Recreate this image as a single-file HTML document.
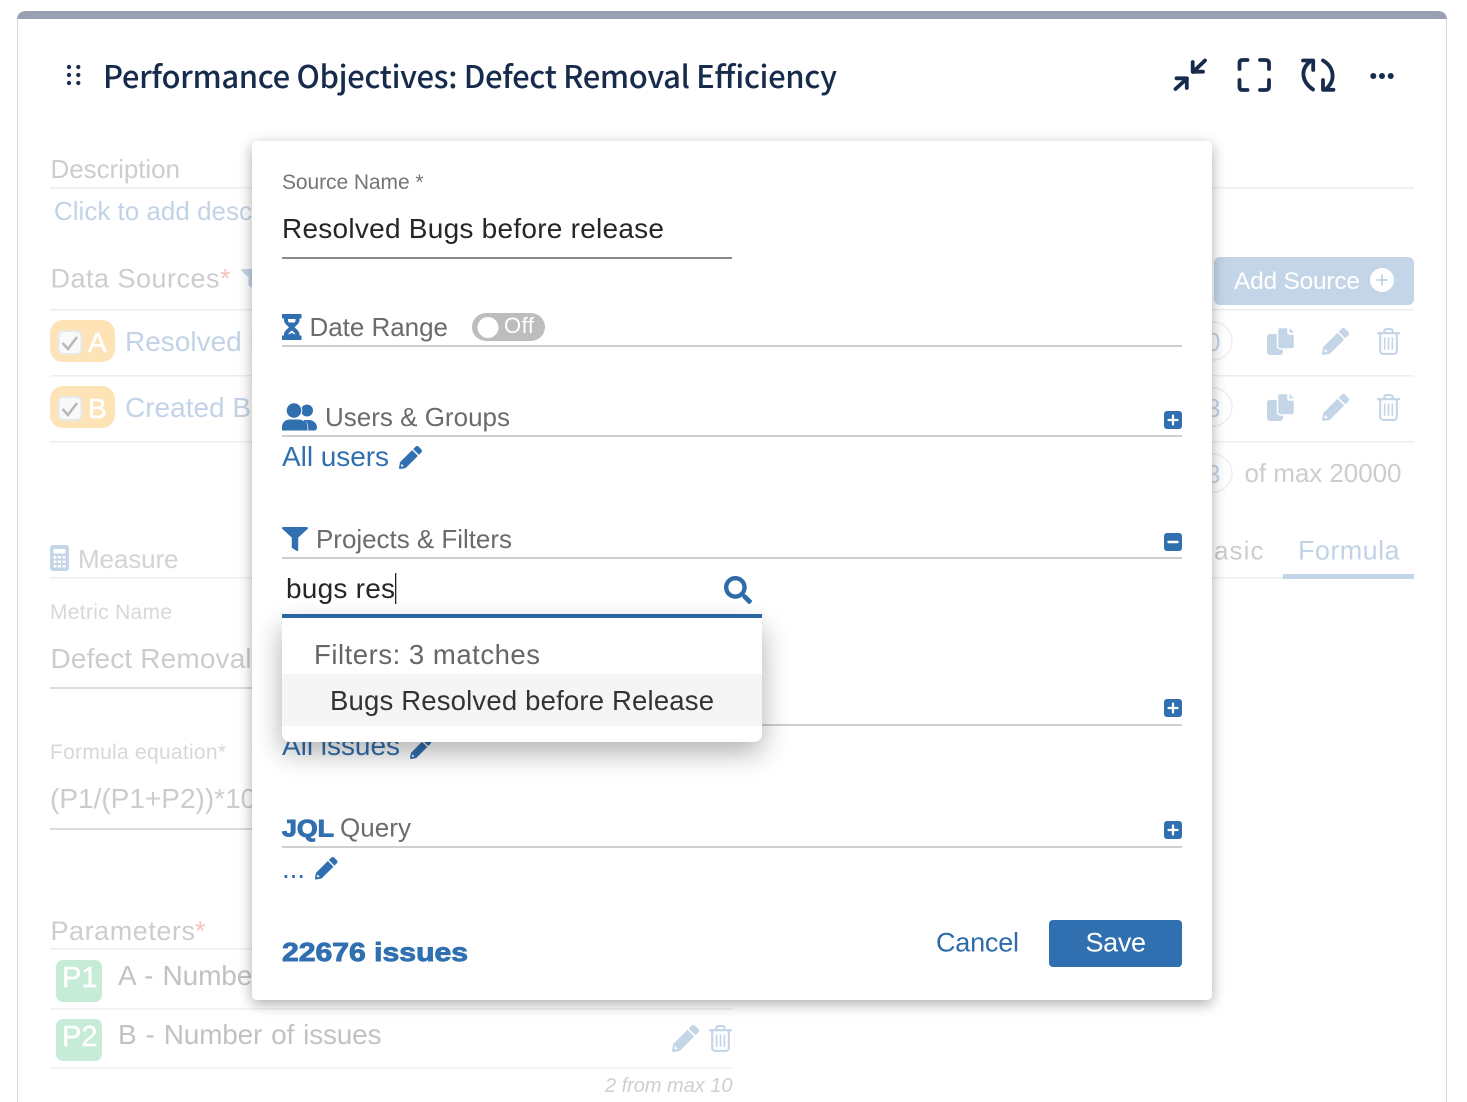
<!DOCTYPE html>
<html><head><meta charset="utf-8">
<style>
html,body{margin:0;padding:0;background:#fff;width:1467px;height:1102px;overflow:hidden}
svg.l{position:absolute;left:0;top:0}
text{font-family:"Liberation Sans",sans-serif;white-space:pre}
#modal{position:absolute;left:252px;top:141px;width:960px;height:859px;background:#fff;border-radius:5px;box-shadow:0 4px 14px rgba(0,0,0,.33)}
#drop{position:absolute;left:282px;top:618px;width:480px;height:124px;background:#fff;border-radius:0 0 8px 8px;box-shadow:0 10px 28px rgba(0,0,0,.32)}
#hl{position:absolute;left:0;top:56px;width:480px;height:52px;background:#f5f5f5}
</style></head><body>
<svg width="0" height="0" style="position:absolute">
<defs>
<symbol id="pencil" viewBox="0 0 512 512"><path fill="currentColor" fill-rule="evenodd" d="M497.9 142.1l-46.1 46.1c-4.7 4.7-12.3 4.7-17 0l-111-111c-4.7-4.7-4.7-12.3 0-17l46.1-46.1c18.7-18.7 49.1-18.7 67.9 0l60.1 60.100c18.800 18.700 18.800 49.100 0 67.900zM284.200 99.800L21.600 362.400.4 483.900c-2.900 16.400 11.400 30.600 27.800 27.800l121.500-21.300 262.600-262.600c4.700-4.700 4.700-12.300 0-17l-111-111c-4.800-4.700-12.400-4.700-17.100 0zM55 395L108 448 45 462Z"/></symbol>
<symbol id="funnel" viewBox="0 0 512 512" preserveAspectRatio="none"><path fill="currentColor" d="M487.976 0H24.028C2.71 0-8.047 25.866 7.058 40.971L192 225.941V432c0 7.831 3.821 15.17 10.237 19.662l80 55.98C298.02 518.69 320 507.493 320 487.98V225.941l184.947-184.97C520.021 25.896 509.338 0 487.976 0z"/></symbol>
<symbol id="search" viewBox="0 0 512 512"><path fill="currentColor" d="M505 442.7L405.3 343c-4.5-4.5-10.6-7-17-7H372c27.6-35.3 44-79.7 44-128C416 93.1 322.9 0 208 0S0 93.1 0 208s93.1 208 208 208c48.3 0 92.7-16.4 128-44v16.3c0 6.4 2.5 12.5 7 17l99.7 99.7c9.4 9.4 24.6 9.4 33.9 0l28.3-28.3c9.4-9.4 9.4-24.6.1-34zM208 336c-70.7 0-128-57.2-128-128 0-70.7 57.2-128 128-128 70.7 0 128 57.2 128 128 0 70.7-57.2 128-128 128z"/></symbol>
<symbol id="trash" viewBox="0 0 22 26"><g fill="none" stroke="currentColor"><path stroke-width="2" stroke-linecap="round" d="M0.5 5H21.5"/><path stroke-width="2" d="M7 5V3.2C7 2 7.8 1 9 1H13C14.2 1 15 2 15 3.2V5"/><path stroke-width="2" d="M3 5V22C3 23.7 4.2 25 6 25H16C17.8 25 19 23.7 19 22V5"/><path stroke-width="1.6" d="M7.3 9V21M11 9V21M14.7 9V21"/></g></symbol>
<symbol id="copy" viewBox="0 0 27 27"><path fill="currentColor" d="M2.5 6H12V12H16V23.500C16 25.400 14.800 27 13 27H3C1.200 27 0 25.400 0 23.500V8.500C0 7.200 1.200 6 2.500 6Z"/><path fill="currentColor" stroke="#fff" stroke-width="1.500" d="M12.500 -0.500H21V5C21 5.600 21.400 6 22 6H27.500V18C27.500 19.800 26.200 21 24.500 21H14C12 21 10.500 19.800 10.500 18V1.500C10.500 0.400 11.400 -0.500 12.500 -0.500Z"/><path fill="currentColor" d="M22.500 0L27 4.500H22.500Z"/></symbol>
<symbol id="plusb" viewBox="0 0 18 18"><rect width="18" height="18" rx="3" fill="#3170b0"/><path d="M9 4.500V13.500M4.500 9H13.500" stroke="#fff" stroke-width="2.200" stroke-linecap="round"/></symbol>
<symbol id="minusb" viewBox="0 0 18 18"><rect width="18" height="18" rx="3" fill="#3170b0"/><path d="M4.500 9H13.500" stroke="#fff" stroke-width="2.400" stroke-linecap="round"/></symbol>
</defs>
</svg>

<!-- Background layer -->
<svg class="l" width="1467" height="1102" viewBox="0 0 1467 1102">
<path d="M17.500 1102V22C17.500 15 21 11.500 27 11.500H1437C1443 11.500 1446.500 15 1446.500 22V1102" fill="#fff" stroke="#d7d9df" stroke-width="1"/>
<path d="M17 19V20C17 14 21 11 26 11H1438C1443 11 1447 14 1447 20V19Z" fill="#97a1b1"/>
<g fill="#172b4d"><circle cx="69" cy="67" r="2.100"/><circle cx="78.300" cy="67" r="2.100"/><circle cx="69" cy="75" r="2.100"/><circle cx="78.300" cy="75" r="2.100"/><circle cx="69" cy="83" r="2.100"/><circle cx="78.300" cy="83" r="2.100"/></g>
<text x="103" y="88" font-size="31" font-weight="500" fill="#172b4d" textLength="734" style="font-family:'Noto Sans CJK JP','Liberation Sans',sans-serif">Performance Objectives: Defect Removal Efficiency</text>
<g fill="none" stroke="#172b4d" stroke-width="3.800" stroke-linecap="round" stroke-linejoin="round">
<path d="M1205 60.500L1193 72M1192.700 62V71.700H1203"/>
<path d="M1175.500 89L1187 78.500M1176.500 78.300H1186.800V88"/>
<path d="M1239.500 69V63C1239.500 61 1240.500 60 1242.500 60H1247.500M1260 60H1265.500C1267.500 60 1269 61 1269 63V69M1269 80V87C1269 89 1267.500 90 1265.500 90H1260M1247.500 90H1242.500C1240.500 90 1239.500 89 1239.500 87V80"/>
<path d="M1313 89.500C1302 82 1300 70 1309.500 62M1303 60.500H1313.200V70"/>
<path d="M1323 60.500C1334 67 1336 80 1326.500 88.500M1323 80V89.800H1333.500"/>
</g>
<g fill="#172b4d"><circle cx="1373.300" cy="76" r="3"/><circle cx="1382" cy="76" r="3"/><circle cx="1390.700" cy="76" r="3"/></g>

<text x="50.500" y="178" font-size="26" fill="#cdcdcd" textLength="129.500">Description</text>
<rect x="50" y="187" width="1364" height="1.500" fill="#eeeeee"/>
<text x="54" y="220" font-size="26" fill="#c2d3e7">Click to add description</text>
<text x="50.500" y="287.500" font-size="27" fill="#cdcdcd" textLength="169">Data Sources</text>
<text x="220" y="287.500" font-size="27" fill="#f5c2bd">*</text>
<use href="#funnel" x="241" y="269" width="20" height="19" color="#c4d5e8"/>
<rect x="50" y="309" width="1364" height="1.500" fill="#eeeeee"/>

<rect x="50" y="320" width="65" height="42" rx="13" fill="#fde3b5"/>
<rect x="58.500" y="331" width="23" height="23" rx="5" fill="#f9f9f9" stroke="#e8e8e8" stroke-width="2"/>
<path d="M62.500 343L68 349L77 337" fill="none" stroke="#b8b8b8" stroke-width="2.600"/>
<text x="88" y="352" font-size="28" fill="#fff" stroke="#fff" stroke-width=".6">A</text>
<text x="125" y="351" font-size="28" fill="#c2d3e7">Resolved Bugs</text>
<rect x="50" y="375" width="1364" height="1.500" fill="#eeeeee"/>

<rect x="50" y="386" width="65" height="42" rx="13" fill="#fde3b5"/>
<rect x="58.500" y="397" width="23" height="23" rx="5" fill="#f9f9f9" stroke="#e8e8e8" stroke-width="2"/>
<path d="M62.500 409L68 415L77 403" fill="none" stroke="#b8b8b8" stroke-width="2.600"/>
<text x="88" y="418" font-size="28" fill="#fff" stroke="#fff" stroke-width=".6">B</text>
<text x="125" y="417" font-size="28" fill="#c2d3e7">Created Bugs</text>
<rect x="50" y="441" width="1364" height="1.500" fill="#eeeeee"/>

<rect x="1214" y="257" width="200" height="48" rx="6" fill="#c4d5e8"/>
<text x="1234" y="289" font-size="24.500" fill="#fff" textLength="126">Add Source</text>
<circle cx="1382" cy="280" r="12" fill="#fff"/>
<path d="M1382 274.500V285.500M1376.500 280H1387.500" stroke="#c4d5e8" stroke-width="2"/>

<circle cx="1213" cy="341" r="19" fill="#fff" stroke="#eeeeee" stroke-width="1.500"/>
<text x="1206" y="351" font-size="26" fill="#c4d5e8">0</text>
<circle cx="1213" cy="407" r="19" fill="#fff" stroke="#eeeeee" stroke-width="1.500"/>
<text x="1206" y="417" font-size="26" fill="#c4d5e8">3</text>
<circle cx="1213" cy="473" r="19" fill="#fff" stroke="#eeeeee" stroke-width="1.500"/>
<text x="1206" y="483" font-size="26" fill="#c4d5e8">3</text>
<use href="#copy" x="1267" y="328" width="27" height="27" color="#c4d5e8"/>
<use href="#copy" x="1267" y="394" width="27" height="27" color="#c4d5e8"/>
<use href="#pencil" x="1322" y="328" width="27" height="27" color="#c4d5e8"/>
<use href="#pencil" x="1322" y="394" width="27" height="27" color="#c4d5e8"/>
<use href="#trash" x="1377" y="328" width="23" height="27" color="#c4d5e8"/>
<use href="#trash" x="1377" y="394" width="23" height="27" color="#c4d5e8"/>
<text x="1244.500" y="482" font-size="26" fill="#cdcdcd" textLength="157">of max 20000</text>

<rect x="50" y="545" width="19" height="26" rx="3" fill="#c4d5e8"/>
<rect x="53.500" y="549" width="12" height="4.500" fill="#fff"/>
<g fill="#fff"><rect x="53.500" y="556" width="3" height="2.500"/><rect x="58" y="556" width="3" height="2.500"/><rect x="62.500" y="556" width="3" height="2.500"/><rect x="53.500" y="560.500" width="3" height="2.500"/><rect x="58" y="560.500" width="3" height="2.500"/><rect x="62.500" y="560.500" width="3" height="2.500"/><rect x="53.500" y="565" width="3" height="2.500"/><rect x="58" y="565" width="3" height="2.500"/><rect x="62.500" y="565" width="3" height="2.500"/></g>
<text x="78" y="568" font-size="26" fill="#d3d3d3" textLength="100.500">Measure</text>
<rect x="50" y="577" width="1364" height="1.500" fill="#eeeeee"/>
<text x="1214" y="559.500" font-size="26" fill="#cdcdcd" textLength="49.500">asic</text>
<text x="1298" y="559.500" font-size="27" fill="#c2d3e7" textLength="101.500">Formula</text>
<rect x="1283" y="574" width="131" height="5" fill="#c4d5e8"/>

<text x="50" y="619" font-size="21" fill="#d8d8d8" textLength="122">Metric Name</text>
<text x="50.500" y="668" font-size="28" fill="#cccccc" letter-spacing=".15">Defect Removal Efficiency</text>
<rect x="50" y="687" width="203" height="2" fill="#dddddd"/>
<text x="50" y="759" font-size="21" fill="#d8d8d8" textLength="176">Formula equation*</text>
<text x="50" y="808" font-size="28" fill="#cccccc">(P1/(P1+P2))*100</text>
<rect x="50" y="828" width="203" height="2" fill="#dddddd"/>

<text x="50.500" y="940" font-size="27" fill="#cdcdcd" textLength="144.500">Parameters</text>
<text x="195" y="940" font-size="27" fill="#f5c2bd">*</text>
<rect x="50" y="948" width="203" height="1.500" fill="#eeeeee"/>
<rect x="56" y="960" width="46" height="42" rx="7" fill="#c6ecd8"/>
<text x="62" y="987" font-size="29" fill="#fff" stroke="#fff" stroke-width=".4">P1</text>
<text x="118" y="985" font-size="28" fill="#c2c2c2" word-spacing="1.500" textLength="263.500">A - Number of issues</text>
<rect x="50" y="1008" width="683" height="1.500" fill="#f0f0f0"/>
<rect x="56" y="1019" width="46" height="42" rx="7" fill="#c6ecd8"/>
<text x="62" y="1046" font-size="29" fill="#fff" stroke="#fff" stroke-width=".4">P2</text>
<text x="118" y="1044" font-size="28" fill="#c2c2c2" word-spacing="1.500" textLength="263.500">B - Number of issues</text>
<rect x="50" y="1067" width="683" height="1.500" fill="#f0f0f0"/>
<use href="#pencil" x="672" y="1025" width="27" height="27" color="#c4d5e8"/>
<use href="#trash" x="709" y="1025" width="23" height="27" color="#c4d5e8"/>
<text x="605" y="1092" font-size="20" font-style="italic" fill="#cfcfcf" textLength="127.500">2 from max 10</text>
</svg>

<div id="modal"></div>

<!-- Modal contents -->
<svg class="l" width="1467" height="1102" viewBox="0 0 1467 1102">
<text x="282" y="189" font-size="21" fill="#757575" textLength="141.500">Source Name *</text>
<text x="282" y="238" font-size="28" fill="#262626" textLength="382">Resolved Bugs before release</text>
<rect x="282" y="257" width="450" height="2" fill="#8a8a8a"/>

<path d="M282 314H301.500V318.500H299.500V320.500C299.500 323 296.500 325.500 294.500 327.200C296.500 329 299.500 331.500 299.500 334V335.500H301.500V340H282V335.500H284V334C284 331.500 287 329 289 327.200C287 325.500 284 323 284 320.500V318.500H282ZM288 319V320.500C288 321 288.200 321.800 289 322.500H294.500C295.300 321.800 295.500 321 295.500 320.500V319ZM291.800 330.500C290 332 288.500 333 288 334.500L291.800 333L295.500 334.500C295 333 293.500 332 291.800 330.500Z" fill="#3170b0" fill-rule="evenodd"/>
<text x="309.500" y="336" font-size="26" fill="#6b6b6b" textLength="138.500">Date Range</text>
<rect x="472" y="313" width="73" height="28" rx="14" fill="#bdbdbd"/>
<circle cx="488" cy="327.500" r="10.500" fill="#fff"/>
<text x="504" y="333" font-size="22" fill="#fff" textLength="30">Off</text>
<rect x="282" y="345" width="900" height="2" fill="#cfcfcf"/>

<g fill="#3170b0">
<circle cx="307" cy="410.500" r="6"/>
<path d="M304 420H309C313.500 420 317 423.500 317 427.500C317 429 316 430.500 314.500 430.500H303Z"/>
<path d="M282 430.500V427C282 422.500 285.500 419.500 290 419.500H298C303 419.500 307.500 422.500 307.500 427.500V430.500Z"/>
<circle cx="294" cy="410.500" r="8.300" fill="#fff"/>
<circle cx="294" cy="410.500" r="7.300"/>
<path d="M305 420.500C306.800 422 308.200 424.500 308.200 427.500V430.500H307.500V427.500C307.500 424.500 306.500 422.200 305 420.500Z" fill="#fff"/>
</g>
<text x="325" y="426" font-size="26" fill="#6b6b6b" textLength="185">Users &amp; Groups</text>
<rect x="282" y="435" width="900" height="2" fill="#cfcfcf"/>
<use href="#plusb" x="1164" y="411" width="18" height="18"/>
<text x="282" y="466" font-size="28" fill="#3170b0" textLength="107">All users</text>
<use href="#pencil" x="399" y="446" width="23" height="23" color="#3170b0"/>

<use href="#funnel" x="282" y="527" width="26" height="24" color="#3170b0"/>
<text x="316" y="548" font-size="26" fill="#6b6b6b" textLength="196">Projects &amp; Filters</text>
<rect x="282" y="557" width="900" height="2" fill="#cfcfcf"/>
<use href="#minusb" x="1164" y="533" width="18" height="18"/>

<text x="286" y="598" font-size="28" fill="#262626" textLength="109">bugs res</text>
<rect x="395" y="573" width="1.300" height="31" fill="#222"/>
<use href="#search" x="724" y="576" width="28" height="28" color="#2f6ba8"/>
<rect x="282" y="614" width="480" height="4" fill="#2f6ba8"/>

<rect x="282" y="724" width="900" height="2" fill="#cfcfcf"/>
<use href="#plusb" x="1164" y="699" width="18" height="18"/>
<text x="282" y="755" font-size="28" fill="#3170b0" textLength="118">All issues</text>
<use href="#pencil" x="410" y="738" width="21" height="21" color="#3170b0"/>

<text x="282" y="836.500" font-size="24" font-weight="bold" fill="#3170b0" stroke="#3170b0" stroke-width="1" textLength="52" lengthAdjust="spacingAndGlyphs">JQL</text>
<text x="340" y="836.500" font-size="26" fill="#6b6b6b" textLength="71">Query</text>
<rect x="282" y="846" width="900" height="2" fill="#cfcfcf"/>
<use href="#plusb" x="1164" y="821" width="18" height="18"/>
<text x="282" y="878" font-size="28" fill="#3170b0" textLength="23">...</text>
<use href="#pencil" x="315" y="857" width="22.500" height="22.500" color="#3170b0"/>

<text x="282" y="961" font-size="26" font-weight="bold" fill="#3170b0" stroke="#3170b0" stroke-width=".9" textLength="186" lengthAdjust="spacingAndGlyphs">22676 issues</text>
<text x="936" y="951.500" font-size="27" fill="#2f6ba8" textLength="83">Cancel</text>
<rect x="1049" y="920" width="133" height="47" rx="4" fill="#3170b0"/>
<text x="1085.500" y="951.500" font-size="27" fill="#fff" textLength="60.500">Save</text>
</svg>

<div id="drop"><div id="hl"></div></div>

<svg class="l" width="1467" height="1102" viewBox="0 0 1467 1102">
<text x="314" y="664" font-size="27.500" fill="#666666" textLength="226">Filters: 3 matches</text>
<text x="330" y="710" font-size="27.500" fill="#333333" textLength="384">Bugs Resolved before Release</text>
</svg>
</body></html>
